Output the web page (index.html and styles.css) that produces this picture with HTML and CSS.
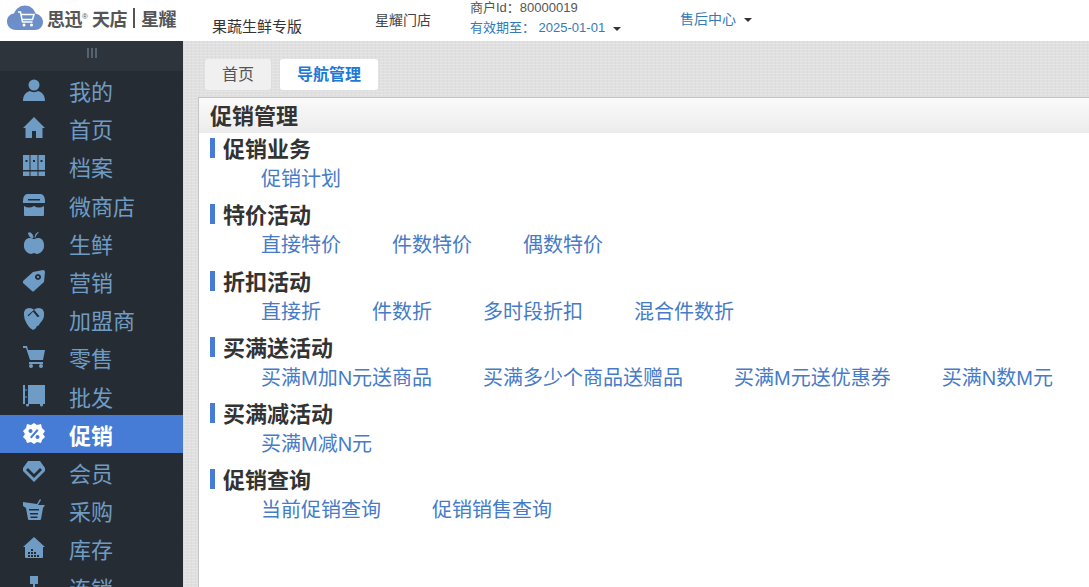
FILE: index.html
```html
<!DOCTYPE html>
<html lang="zh">
<head>
<meta charset="utf-8">
<title>促销管理</title>
<link rel="stylesheet" href="styles.css">
</head>
<body>
<header class="top">
  <div class="logo">
    <svg class="cloud" width="36" height="26" viewBox="0 0 36 26"><path d="M9 25C3.500 25 0 21 0 16.500 0 12 3 9 7 8.500 9 3.500 13 0.500 18 0.500c5 0 9 3 10.500 8C33 9.500 36 13 36 17c0 4.500-3.500 8-8 8z" fill="#6d8fc9"/><path d="M11 7h2.500l2 10h10M14 9.500h13l-1.500 5H15" fill="none" stroke="#fff" stroke-width="1.500"/><circle cx="17" cy="20" r="1.500" fill="#fff"/><circle cx="24.500" cy="20" r="1.500" fill="#fff"/></svg>
    <span class="brand">思迅<sup>®</sup> 天店</span><span class="bar"></span><span class="brand">星耀</span>
  </div>
  <div class="edition">果蔬生鲜专版</div>
  <div class="store">星耀门店</div>
  <div class="merchant">
    <div class="mid">商户Id：80000019</div>
    <div class="expire">有效期至： 2025-01-01<i class="caret"></i></div>
  </div>
  <div class="service">售后中心<i class="caret"></i></div>
</header>
<div class="body">
  <nav class="side">
    <div class="toggle"><span></span><span></span><span></span></div>
    <ul class="menu">
      <li><svg class="ic" viewBox="0 0 22 22"><circle cx="11" cy="6" r="5.500"/><path d="M0 22c0-6 3-9 7-10 2 1.500 6 1.500 8 0 4 1 7 4 7 10z"/></svg>我的</li>
      <li><svg class="ic" viewBox="0 0 22 22"><path fill-rule="evenodd" d="M11 0 22 11h-2.500v10H2.500V11H0zM9 14v7h4v-7z"/></svg>首页</li>
      <li><svg class="ic" viewBox="0 0 22 22"><path fill-rule="evenodd" d="M0 0h6.500v15H0zM7.500 0h7v15h-7zM15.500 0H22v15h-6.500zM0 16.500h6.500V21H0zM7.500 16.500h7V21h-7zM15.500 16.500H22V21h-6.500zM2.500 5v2h2V5zM10 5v2h2V5zM17.500 5v2h2V5z"/></svg>档案</li>
      <li><svg class="ic" viewBox="0 0 22 22"><path fill-rule="evenodd" d="M4 0h14q4 1 4 7v2H0V7q0-6 4-7zM5 5v1.500h12V5zM1 12q5 3 10 0 5 3 10 0v9q0 1-1 1H2q-1 0-1-1z"/></svg>微商店</li>
      <li><svg class="ic" viewBox="0 0 22 24"><path d="M11 8C6 5 0 7 0 15c0 5 4 9 8 9 1 0 2-1 3-1s2 1 3 1c4 0 8-4 8-9 0-8-6-10-11-7z"/><path d="M5 1q4-1 5 5-4 1-5-5zM12 6q0-4 4-6" stroke="#6f9cc4" fill="#6f9cc4"/></svg>生鲜</li>
      <li><svg class="ic" viewBox="0 0 22 22"><path fill-rule="evenodd" d="M10 2 20 0q2 0 2 2l-1 10-10 9q-1 1-2 0L0 13q-1-1 0-2zM15 4a3 3 0 1 0 .01 0zM15 6a1 1 0 1 1-.01 0z"/></svg>营销</li>
      <li><svg class="ic" viewBox="0 0 22 24"><path fill-rule="evenodd" d="M6 0q3 0 5 2 2-2 5-2 6 0 6 7 0 5-4 9l-2 3-2 1-1 2-3 2-3-2-2-2-2-3Q0 12 0 7 0 0 6 0zM5 9l5-5 5 6 2-1-6-7-1 1-6 5z"/></svg>加盟商</li>
      <li><svg class="ic" viewBox="0 0 22 22"><path d="M0 0h4l1 4h17l-2 10H7L3 2H0zM6 16h14v2H6z"/><circle cx="8" cy="20" r="2"/><circle cx="18" cy="20" r="2"/></svg>零售</li>
      <li><svg class="ic" viewBox="0 0 22 22"><path fill-rule="evenodd" d="M0 0h2v19h3V0h17v19h-2v1a1.500 1.500 0 0 1-3 0v-1H6v1a1.500 1.500 0 0 1-3 0v-1H0zM2.500 4v2l2-1zM2.500 11v2l2-1z"/></svg>批发</li>
      <li class="on"><svg class="ic" viewBox="0 0 22 22"><path fill-rule="evenodd" d="M11 0l3 2 4-1 1 4 3 3-2 3 2 3-3 3-1 3-4-1-3 2-3-2-4 1-1-3-3-3 2-3-2-3 3-3 1-4 4 1zM14 6l-7 8 1.500 1.500 7-8zM7.500 6a2 2 0 1 0 .01 0zM14.500 12a2 2 0 1 0 .01 0z"/></svg>促销</li>
      <li><svg class="ic" viewBox="0 0 22 22"><path fill-rule="evenodd" d="M5 0h12l5 7v3L11 21 0 10V7zM5 7l6 6 6-6 2 2-8 8-8-8z"/></svg>会员</li>
      <li><svg class="ic" viewBox="0 0 22 22"><path fill-rule="evenodd" d="M0 3 14 5l3-5 1 1-3 5h7l-2 3-2 11q0 1-1 1H6q-1 0-1-1L3 9 0 7zM6 10v1.500h10V10zM7 14v1.500h8V14zM7.500 17.500V19h7v-1.500z"/></svg>采购</li>
      <li><svg class="ic" viewBox="0 0 22 22"><path fill-rule="evenodd" d="M11 0 22 10h-2v10q0 1-1 1H3q-1 0-1-1V10H0zM8 12v2h2v-2zM11 15v2h2v-2zM8 15v2h2v-2zM5 15v2h2v-2zM11 18v2h2v-2zM8 18v2h2v-2zM14 18v2h2v-2zM5 18v2h2v-2z"/></svg>库存</li>
      <li><svg class="ic" viewBox="0 0 22 22"><path d="M7 0h8v8h-3v3h10v3H0v-3h10V8H7z"/></svg>连销</li>
    </ul>
  </nav>
  <main class="main">
    <div class="tabs">
      <span class="tab">首页</span>
      <span class="tab cur">导航管理</span>
    </div>
    <section class="panel">
      <h1 class="ptitle">促销管理</h1>
      <div class="groups">
        <div class="group">
          <h2>促销业务</h2>
          <div class="links"><a>促销计划</a></div>
        </div>
        <div class="group">
          <h2>特价活动</h2>
          <div class="links"><a>直接特价</a><a>件数特价</a><a>偶数特价</a></div>
        </div>
        <div class="group">
          <h2>折扣活动</h2>
          <div class="links"><a>直接折</a><a>件数折</a><a>多时段折扣</a><a>混合件数折</a></div>
        </div>
        <div class="group">
          <h2>买满送活动</h2>
          <div class="links"><a>买满M加N元送商品</a><a>买满多少个商品送赠品</a><a>买满M元送优惠券</a><a>买满N数M元</a></div>
        </div>
        <div class="group">
          <h2>买满减活动</h2>
          <div class="links"><a>买满M减N元</a></div>
        </div>
        <div class="group">
          <h2>促销查询</h2>
          <div class="links"><a>当前促销查询</a><a>促销销售查询</a></div>
        </div>
      </div>
    </section>
  </main>
</div>
</body>
</html>
```
FILE: styles.css
```css
* { box-sizing: border-box; }
html, body { margin: 0; height: 100%; overflow: hidden; }
body {
  font-family: "Liberation Sans", "Noto Sans CJK SC", sans-serif;
  display: flex;
  flex-direction: column;
  color: #333;
  background: #fff;
}
.top {
  flex: 0 0 41px;
  display: flex;
  background: #fff;
  font-size: 14px;
  position: relative;
}
.logo {
  flex: 0 0 212px;
  display: flex;
  align-items: center;
  padding: 0 0 5px 7px;
  white-space: nowrap;
}
.cloud { flex: none; margin-right: 4px; }
.brand { font-size: 18px; font-weight: 700; color: #555; letter-spacing: -0.500px; }
.brand sup { font-size: 8px; font-weight: 400; }
.bar { width: 2px; height: 20px; background: #555; margin: 0 6px; }
.edition { flex: 0 0 163px; font-size: 15px; padding-top: 15px; }
.store { flex: 0 0 95px; font-size: 14px; padding-top: 9px; color: #444; }
.merchant { flex: 0 0 210px; font-size: 13px; line-height: 20px; margin-top: -2px; }
.mid { color: #555; }
.expire, .service { color: #337ab7; }
.service { font-size: 14px; padding-top: 8px; }
.caret {
  display: inline-block;
  margin-left: 8px;
  vertical-align: middle;
  border-style: solid;
  border-width: 4px 4px 0;
  border-color: #333 transparent transparent;
}
.body { flex: 1; display: flex; min-height: 0; }
.side { flex: 0 0 183px; background: #262c33; overflow: hidden; }
.toggle {
  height: 30px;
  background: #2d343c;
  display: flex;
  justify-content: center;
  gap: 2px;
  padding-top: 7px;
}
.toggle span { width: 2px; height: 10px; background: #566270; }
.menu { list-style: none; margin: 0; padding: 0; }
.menu li {
  height: 38.200px;
  display: flex;
  align-items: center;
  gap: 24px;
  padding-left: 23px;
  font-size: 22px;
  color: #6f9cc4;
  white-space: nowrap;
}
.menu li.on { background: #467bd6; color: #fff; font-weight: 700; }
.ic { width: 22px; height: 22px; flex: none; fill: currentColor; }
.main {
  flex: 1;
  min-width: 0;
  padding: 18px 0 0 15px;
  display: flex;
  flex-direction: column;
  background-color: #e0e0e0;
  background-image:
    repeating-linear-gradient(0deg, rgba(255,255,255,.18) 0 1px, transparent 1px 3px),
    repeating-linear-gradient(90deg, rgba(0,0,0,.025) 0 1px, transparent 1px 4px);
}
.tabs { display: flex; gap: 9px; padding-left: 7px; height: 38px; align-items: flex-start; }
.tab {
  height: 31px;
  line-height: 31px;
  padding: 0 17px;
  border-radius: 3px;
  background: #f0f0f0;
  color: #555;
  font-size: 16px;
}
.tab.cur { background: #fff; color: #1d7ad6; font-weight: 700; }
.panel { flex: 1; background: #fff; border-top: 1px solid #c4c4c4; border-left: 1px solid #c4c4c4; min-height: 0; }
.ptitle {
  margin: 0;
  height: 35px;
  line-height: 37px;
  padding-left: 11px;
  font-size: 22px;
  font-weight: 700;
  color: #333;
  background: linear-gradient(#fafafa, #ececec);
}
.groups { padding: 2px 0 0 11px; }
.group { height: 66.300px; }
.group h2 {
  margin: 0;
  height: 29px;
  line-height: 29px;
  padding-left: 13px;
  font-size: 22px;
  font-weight: 700;
  color: #333;
  position: relative;
}
.group h2::before {
  content: "";
  position: absolute;
  left: 0;
  top: 3px;
  width: 5px;
  height: 20px;
  background: #467bd6;
}
.links {
  display: flex;
  gap: 51px;
  padding-left: 51px;
  font-size: 20px;
  line-height: 30px;
  color: #467bc8;
  white-space: nowrap;
}
```
